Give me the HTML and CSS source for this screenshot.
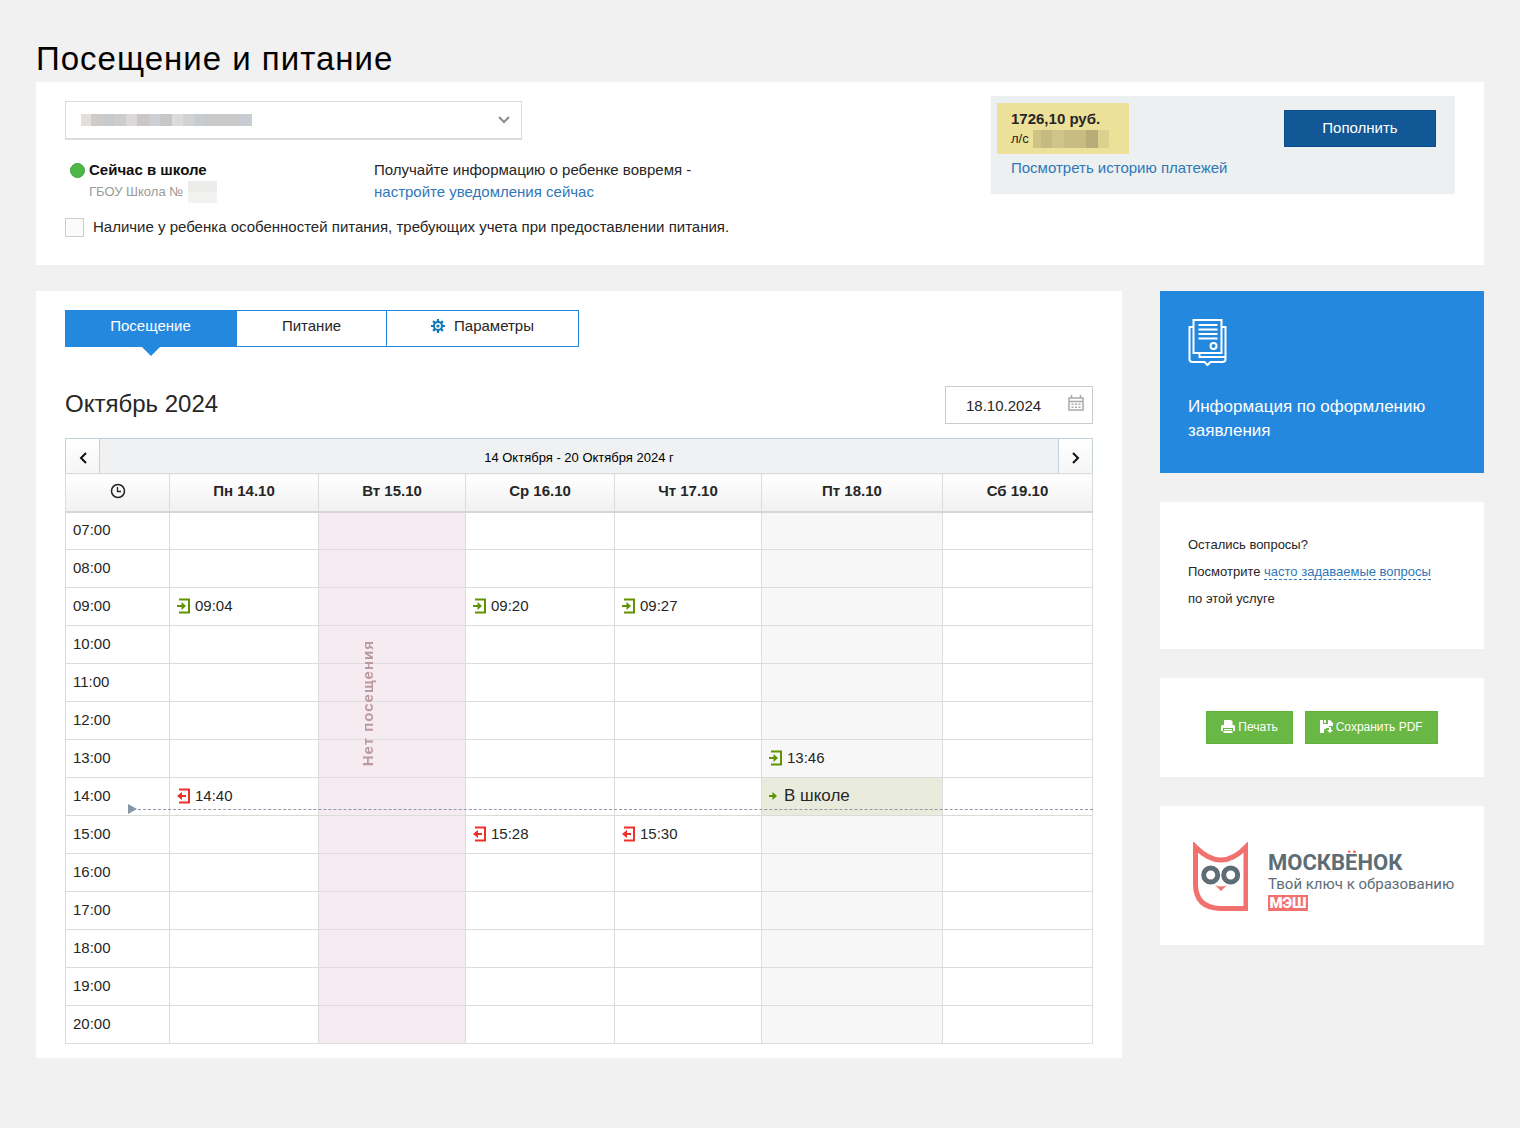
FILE: index.html
```html
<!DOCTYPE html>
<html lang="ru">
<head>
<meta charset="utf-8">
<meta name="viewport" content="width=device-width, initial-scale=1">
<title>Посещение и питание</title>
<link rel="stylesheet" href="styles.css">
</head>
<body>
<svg class="sprite" aria-hidden="true">
  <symbol id="icon-in" viewBox="0 0 14 16">
    <path d="M2 1.500h10v13H2" fill="none" stroke="currentColor" stroke-width="2"/>
    <path d="M0 7h4.500V4L9 8l-4.500 4V9H0z" fill="currentColor"/>
  </symbol>
  <symbol id="icon-out" viewBox="0 0 14 16">
    <path d="M2 1.500h10v13H2" fill="none" stroke="currentColor" stroke-width="2"/>
    <path d="M9 7H5V4L0 8l5 4V9h4z" fill="currentColor"/>
  </symbol>
</svg>
<main class="page">
  <h1 class="title">Посещение и питание</h1>

  <section class="panel summary">
    <div class="child">
      <div class="child-select">
        <select aria-label="Ребенок"><option></option></select>
        <span class="mosaic mosaic-name"></span>
        <svg class="chevron" viewBox="0 0 12 8"><path d="M1 1l5 5 5-5" fill="none" stroke="#8c8c8c" stroke-width="2"/></svg>
      </div>
      <div class="status-row">
        <div class="status">
          <strong>Сейчас в школе</strong>
          <div class="school">ГБОУ Школа № <span class="mosaic mosaic-school"></span></div>
        </div>
        <div class="notice">Получайте информацию о ребенке вовремя -<br><a href="#">настройте уведомления сейчас</a></div>
      </div>
      <label class="diet"><input type="checkbox">Наличие у ребенка особенностей питания, требующих учета при предоставлении питания.</label>
    </div>
    <div class="balance">
      <div>
        <div class="amount">
          <strong>1726,10 руб.</strong>
          <div class="account">л/с <span class="mosaic mosaic-account"></span></div>
        </div>
        <a class="history" href="#">Посмотреть историю платежей</a>
      </div>
      <button class="pay" type="button">Пополнить</button>
    </div>
  </section>

  <div class="columns">
    <section class="panel schedule">
      <nav class="tabs">
        <button class="tab active" type="button">Посещение</button>
        <button class="tab" type="button">Питание</button>
        <button class="tab" type="button"><svg class="gear" viewBox="0 0 14 14"><g stroke="#0f7bb5" stroke-width="2.200"><path d="M7 0v14M0 7h14M2.100 2.100l9.800 9.800M11.900 2.100l-9.800 9.800"/></g><circle cx="7" cy="7" r="4" fill="#fff" stroke="#0f7bb5" stroke-width="2"/><circle cx="7" cy="7" r="1.600" fill="#0f7bb5"/></svg>Параметры</button>
      </nav>
      <div class="month">
        <h2>Октябрь 2024</h2>
        <div class="date">
          <input type="text" value="18.10.2024" aria-label="Дата">
          <svg class="calendar" viewBox="0 0 16 16"><path d="M1 3h14v12H1zM1 6.500h14" fill="none" stroke="#a9a9a9" stroke-width="1.500"/><path d="M3.500 0v3M12.500 0v3" stroke="#a9a9a9" stroke-width="1.500"/><path d="M3.500 9.300h9.500M3.500 12.200h9.500" stroke="#a9a9a9" stroke-width="1.500" stroke-dasharray="2 1.500"/></svg>
        </div>
      </div>
      <div class="week">
        <button type="button" aria-label="Предыдущая неделя"><svg viewBox="0 0 8 12"><path d="M7 1L2 6l5 5" fill="none" stroke="#111" stroke-width="2"/></svg></button>
        <span>14 Октября - 20 Октября 2024 г</span>
        <button type="button" aria-label="Следующая неделя"><svg viewBox="0 0 8 12"><path d="M1 1l5 5-5 5" fill="none" stroke="#111" stroke-width="2"/></svg></button>
      </div>
      <table class="grid">
        <colgroup><col class="c-time"><col class="c-day"><col class="c-narrow absent"><col class="c-day"><col class="c-narrow"><col class="c-today today"><col></colgroup>
        <thead>
          <tr><th><svg class="clock" viewBox="0 0 16 16"><circle cx="8" cy="8" r="6.500" fill="none" stroke="#222" stroke-width="1.500"/><path d="M7.500 4v4.500H11" fill="none" stroke="#222" stroke-width="1.300"/></svg></th><th>Пн 14.10</th><th>Вт 15.10</th><th>Ср 16.10</th><th>Чт 17.10</th><th>Пт 18.10</th><th>Сб 19.10</th></tr>
        </thead>
        <tbody>
          <tr><th>07:00</th><td></td><td></td><td></td><td></td><td></td><td></td></tr>
          <tr><th>08:00</th><td></td><td></td><td></td><td></td><td></td><td></td></tr>
          <tr><th>09:00</th><td><span class="entry in"><svg><use href="#icon-in"/></svg>09:04</span></td><td></td><td><span class="entry in"><svg><use href="#icon-in"/></svg>09:20</span></td><td><span class="entry in"><svg><use href="#icon-in"/></svg>09:27</span></td><td></td><td></td></tr>
          <tr><th>10:00</th><td></td><td class="anchor"><span class="no-visit">Нет посещения</span></td><td></td><td></td><td></td><td></td></tr>
          <tr><th>11:00</th><td></td><td></td><td></td><td></td><td></td><td></td></tr>
          <tr><th>12:00</th><td></td><td></td><td></td><td></td><td></td><td></td></tr>
          <tr><th>13:00</th><td></td><td></td><td></td><td></td><td><span class="entry in"><svg><use href="#icon-in"/></svg>13:46</span></td><td></td></tr>
          <tr class="current"><th>14:00<span class="now"></span></th><td><span class="entry out"><svg><use href="#icon-out"/></svg>14:40</span></td><td></td><td></td><td></td><td class="present"><span class="entry at"><svg viewBox="0 0 8 8"><path d="M0 3h3.500V0L8 4 3.500 8V5H0z" fill="currentColor"/></svg>В школе</span></td><td></td></tr>
          <tr><th>15:00</th><td></td><td></td><td><span class="entry out"><svg><use href="#icon-out"/></svg>15:28</span></td><td><span class="entry out"><svg><use href="#icon-out"/></svg>15:30</span></td><td></td><td></td></tr>
          <tr><th>16:00</th><td></td><td></td><td></td><td></td><td></td><td></td></tr>
          <tr><th>17:00</th><td></td><td></td><td></td><td></td><td></td><td></td></tr>
          <tr><th>18:00</th><td></td><td></td><td></td><td></td><td></td><td></td></tr>
          <tr><th>19:00</th><td></td><td></td><td></td><td></td><td></td><td></td></tr>
          <tr><th>20:00</th><td></td><td></td><td></td><td></td><td></td><td></td></tr>
        </tbody>
      </table>
    </section>

    <aside class="side">
      <a class="info" href="#">
        <svg viewBox="0 0 38 48" fill="none" stroke="#fff" stroke-width="2"><path d="M5 8H1v32q0 3 3 3h12l3 3 3-3h12q3 0 3-3V8h-4"/><path d="M5 1h28v33H5z"/><path d="M10 6h19M10 10.500h19M10 15h19M10 19.500h19"/><path d="M11 34v4h26"/><circle cx="25" cy="27" r="3"/></svg>
        Информация по оформлению заявления
      </a>
      <div class="panel questions">Остались вопросы?<br>Посмотрите <a href="#">часто задаваемые вопросы</a><br>по этой услуге</div>
      <div class="panel actions">
        <button type="button"><svg class="ic-print" viewBox="0 0 14 13" fill="#fff"><path d="M3 0h7l1.500 1.500V5H3z"/><path d="M1 5h12l1 1v5h-2V8H2v3H0V6z"/><path d="M3 9h8v1.300H3zM2.500 11h9v2h-9z"/></svg>Печать</button>
        <button type="button"><svg class="ic-save" viewBox="0 0 13 13" fill="#fff"><path d="M0 0h3v4h5V0h2l3 3v3H9v2H6v1H4v4H0z"/><path d="M4 0h2v3H4z"/><path d="M9 7h2v3h2l-3 3-3-3h2z"/></svg>Сохранить PDF</button>
      </div>
      <div class="panel brand">
        <svg viewBox="0 0 56 70"><path d="M3.500 5Q29 31 54 5V66.500H28Q3.500 65.500 3.500 42z" fill="none" stroke="#f1716f" stroke-width="5"/><g fill="none" stroke="#5e6d75" stroke-width="5"><circle cx="18.700" cy="33" r="7"/><circle cx="38.700" cy="33" r="7"/></g><path d="M23 43q6 3 12 0l-6 6z" fill="#f1716f"/></svg>
        <div class="brand-text">
          <div class="brand-name">МОСКВ<span>Ё</span>НОК</div>
          <div class="brand-line">Твой ключ к образованию</div>
          <div class="brand-tag">МЭШ</div>
        </div>
      </div>
    </aside>
  </div>
</main>
</body>
</html>
```
FILE: styles.css
```css
* { box-sizing: border-box; }
body {
  margin: 0;
  background: #f1f1f1;
  color: #262626;
  font: 15px/22px "Liberation Sans", Arial, sans-serif;
}
button, input, select { font: inherit; color: inherit; }
button { cursor: pointer; }
a { color: #2f77b8; text-decoration: none; }
svg { display: block; flex: none; }
.sprite { position: absolute; width: 0; height: 0; }
.page { padding: 36px 36px 70px; }
.title { margin: 0; font-size: 33px; line-height: 46px; font-weight: 400; letter-spacing: 1px; color: #000; }
.panel { background: #fff; }

.summary {
  display: grid;
  grid-template-columns: 1fr 464px;
  align-items: start;
  padding: 14px 29px 27px;
}
.child { padding-top: 5px; }
.child-select { position: relative; width: 457px; }
.child-select select {
  appearance: none;
  display: block;
  width: 100%;
  height: 39px;
  border: 1px solid #d9dddd;
  border-bottom-width: 2px;
  border-radius: 0;
  background: #fff;
}
.chevron { position: absolute; right: 12px; top: 15px; width: 12px; height: 8px; pointer-events: none; }
.mosaic { display: inline-block; }
.mosaic-name {
  position: absolute;
  left: 16px;
  top: 13px;
  width: 171px;
  height: 12px;
  background: linear-gradient(90deg, #e3dfda 0 10px, #cdcccb 10px 22px, #c5cacf 22px 33px, #cdcdce 33px 45px, #dad9d8 45px 56px, #cac7c6 56px 68px, #cccfd4 68px 79px, #c8c7c6 79px 91px, #dbdbdc 91px 102px, #d2d2d0 102px 113px, #c9cccf 113px 125px, #c9c9ca 125px 148px, #cbcac8 148px 159px, #c9cdd3 159px);
}
.status-row { display: flex; margin-top: 19px; }
.status { position: relative; width: 309px; padding-left: 24px; color: #111; }
.status::before {
  content: "";
  position: absolute;
  left: 5px;
  top: 4px;
  width: 13px;
  height: 13px;
  border-radius: 50%;
  background: #4db748;
  border: 1px solid #3ea33a;
}
.school { display: flex; align-items: center; gap: 5px; font-size: 13px; color: #999; }
.mosaic-school { width: 29px; height: 22px; background: linear-gradient(#ececeb 50%, #f2f2f1 50%); }
.diet { display: flex; align-items: center; gap: 9px; margin-top: 13px; }
.diet input {
  appearance: none;
  width: 19px;
  height: 19px;
  margin: 0;
  border: 1px solid #ccc;
  background: #fbfbfb;
}
.balance {
  display: flex;
  justify-content: space-between;
  align-items: flex-start;
  padding: 7px 19px 15px 6px;
  background: #ecf0f1;
}
.amount { width: 132px; padding: 6px 0 5px 14px; background: #ede19a; line-height: 20px; }
.account { display: flex; align-items: center; gap: 4px; font-size: 13px; }
.mosaic-account {
  width: 76px;
  height: 18px;
  background: linear-gradient(90deg, #cfc486 0 8px, #c5ba80 8px 19px, #d0c588 19px 31px, #c8bc82 31px 53px, #b8ad78 53px 65px, #ddd190 65px);
}
.history { display: block; padding: 3px 0 0 14px; }
.pay {
  width: 152px;
  height: 37px;
  margin-top: 7px;
  padding: 0 0 2px;
  border: 1px solid #0c4c8c;
  background: #125896;
  color: #fff;
}

.columns { display: grid; grid-template-columns: minmax(0, 1fr) 324px; gap: 38px; align-items: start; margin-top: 26px; }
.schedule { padding: 19px 29px 14px; }
.tabs { display: grid; grid-template-columns: 172px 150px 192px; width: max-content; }
.tab {
  position: relative;
  display: flex;
  align-items: center;
  justify-content: center;
  height: 37px;
  padding: 0 0 5px;
  border: 1px solid #2488de;
  border-left-width: 0;
  background: #fff;
}
.tab.active { background: #2488de; color: #fff; }
.tab.active::after {
  content: "";
  position: absolute;
  left: 50%;
  top: 100%;
  margin-left: -10px;
  border: 10px solid transparent;
  border-top-color: #2488de;
  border-bottom: 0;
}
.gear { width: 14px; height: 14px; margin-right: 9px; }
.month { display: flex; justify-content: space-between; margin-top: 39px; }
.month h2 { margin: 0; font-size: 24px; line-height: 36px; font-weight: 400; }
.date { position: relative; width: 148px; }
.date input { display: block; width: 100%; height: 38px; padding: 0 0 0 20px; border: 1px solid #ccc; background: #fff; }
.calendar { position: absolute; right: 9px; top: 9px; width: 16px; height: 16px; }
.week {
  display: grid;
  grid-template-columns: 34px 1fr 34px;
  height: 35px;
  margin-top: 14px;
  border: 1px solid #c3d1d8;
  border-bottom: 0;
  background: #eff1f3;
  font-size: 13px;
  color: #000;
}
.week span { align-self: center; padding-top: 3px; text-align: center; }
.week button {
  display: grid;
  place-items: center;
  padding: 3px 0 0;
  border: 0 solid #c3d1d8;
  border-right-width: 1px;
  background: linear-gradient(#fff, #f6f6f6);
}
.week button:last-child { border-width: 0 0 0 1px; }
.week svg { width: 8px; height: 12px; }

.grid { width: 100%; table-layout: fixed; border-collapse: collapse; }
.c-time { width: 104px; }
.c-day { width: 149px; }
.c-narrow { width: 147px; }
.c-today { width: 181px; }
.absent { background: #f5ebf1; }
.today { background: #f7f7f7; }
.grid th, .grid td { height: 38px; padding: 0 7px; border: 1px solid #dcdcdc; }
.grid thead th {
  height: 38px;
  padding-bottom: 3px;
  border-bottom: 2px solid #d6d6d6;
  background: linear-gradient(#fff, #f1f1f1);
}
.grid tbody th { padding-bottom: 2px; text-align: left; font-weight: 400; }
.clock { width: 16px; height: 16px; margin: 0 auto; }
.entry { display: flex; align-items: center; gap: 4px; padding-bottom: 2px; }
.entry svg { width: 14px; height: 16px; }
.in svg, .at svg { color: #5f9400; }
.out svg { color: #ee302b; }
.entry.at { gap: 7px; font-size: 17px; }
.entry.at svg { width: 8px; height: 8px; }
.grid .present { background: #e9ecdd; }
.anchor, .current { position: relative; }
.no-visit {
  position: absolute;
  left: 38px;
  top: 14px;
  writing-mode: vertical-rl;
  transform: rotate(180deg);
  white-space: nowrap;
  font-weight: 700;
  letter-spacing: 1px;
  color: #bb9a9f;
}
.now {
  position: absolute;
  left: 62px;
  right: 0;
  top: 31px;
  border-top: 1px dashed #8d99a8;
}
.now::before {
  content: "";
  position: absolute;
  left: 0;
  top: -6px;
  border: 5px solid transparent;
  border-left: 9px solid #8696a6;
  border-right: 0;
}

.side { display: grid; grid-template-columns: minmax(0, 1fr); gap: 29px; }
.info { display: block; padding: 28px 28px 30px; background: #2488de; color: #fff; font-size: 17px; line-height: 24px; }
.info svg { width: 39px; height: 48px; margin-bottom: 28px; }
.questions { padding: 29px 28px 37px; font-size: 13px; line-height: 27px; }
.questions a { border-bottom: 1px dashed #2f77b8; }
.actions { display: flex; justify-content: center; gap: 12px; padding: 33px 0; }
.actions button {
  display: flex;
  align-items: center;
  gap: 3px;
  height: 33px;
  padding: 0 14px 2px;
  border: 1px solid #5fb336;
  background: #69b845;
  color: #fff;
  font-size: 12px;
}
.ic-print { width: 14px; height: 13px; }
.ic-save { width: 13px; height: 13px; }
.brand { display: flex; gap: 20px; padding: 36px 28px 33px 32px; }
.brand svg { width: 56px; height: 70px; }
.brand-text { padding-top: 10px; font-family: Roboto, "Open Sans", sans-serif; color: #5e6d75; white-space: nowrap; }
.brand-name { font-size: 22px; line-height: 22px; font-weight: 700; }
.brand-name span {
  background: linear-gradient(#f1716f 4px, #5e6d75 4px);
  background-clip: text;
  color: transparent;
}
.brand-line { font-size: 15px; line-height: 20px; }
.brand-tag { width: 40px; margin-top: 1px; background: #f1716f; color: #fff; font-size: 15px; line-height: 16px; font-weight: 900; text-align: center; }
```
